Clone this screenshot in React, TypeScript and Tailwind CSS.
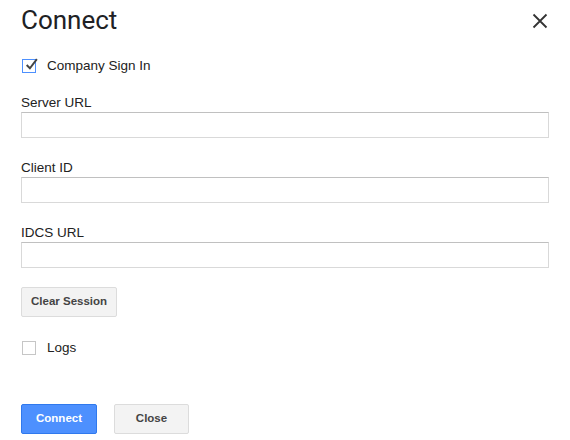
import React, { useState } from 'react';

function Checkbox({ checked, onChange }: { checked: boolean; onChange: () => void }) {
  return (
    <button
      type="button"
      onClick={onChange}
      className={`relative w-[14px] h-[14px] border bg-white ${checked ? 'border-[#4d90fe]' : 'border-[#c6c6c6]'}`}
    >
      {checked && (
        <svg viewBox="0 0 14 14" className="absolute left-[1px] top-[-3px] w-[15px] h-[15px]">
          <path d="M2.5 7.5 L5.5 10.5 L12 2" fill="none" stroke="#444" strokeWidth="1.8" />
        </svg>
      )}
    </button>
  );
}

function Field({ label }: { label: string }) {
  return (
    <div className="flex flex-col">
      <label className="text-[13.5px] leading-[20px] text-[#222] mb-[-1px]">{label}</label>
      <input className="h-[26px] w-full border border-[#d9d9d9] border-t-[#c0c0c0] outline-none px-2 text-[13px]" />
    </div>
  );
}

export default function App() {
  const [company, setCompany] = useState(true);
  const [logs, setLogs] = useState(false);

  return (
    <div className="w-[570px] h-[440px] bg-white pl-[21px] pr-[21px] font-['Liberation_Sans',Arial,sans-serif] text-[#222]">
      {/* Header */}
      <div className="flex items-start justify-between pt-[3px]">
        <h1 className="font-['Roboto',sans-serif] text-[26px] leading-[34px] text-[#202124]">Connect</h1>
        <button type="button" className="mt-[10px] mr-[1px]">
          <svg viewBox="0 0 16 16" className="w-[16px] h-[16px]">
            <path d="M1.5 1.5 L14.5 14.5 M14.5 1.5 L1.5 14.5" stroke="#333" strokeWidth="1.8" />
          </svg>
        </button>
      </div>

      <div className="flex items-center gap-[11px] mt-[21px] pl-[1px]">
        <Checkbox checked={company} onChange={() => setCompany(!company)} />
        <span className="text-[13.5px] leading-[16px]">Company Sign In</span>
      </div>

      <div className="flex flex-col gap-[20px] mt-[19px]">
        <Field label="Server URL" />
        <Field label="Client ID" />
        <Field label="IDCS URL" />
      </div>

      <button
        type="button"
        className="mt-[19px] h-[30px] px-[9px] rounded-[2px] border border-[#dcdcdc] bg-[#f3f3f3] text-[11.5px] font-bold text-[#444]"
      >
        Clear Session
      </button>

      <div className="flex items-center gap-[11px] mt-[23px] pl-[1px]">
        <Checkbox checked={logs} onChange={() => setLogs(!logs)} />
        <span className="text-[13.5px] leading-[16px]">Logs</span>
      </div>

      <div className="flex gap-[17px] mt-[48px]">
        <button
          type="button"
          className="h-[30px] w-[76px] rounded-[2px] border border-[#3079ed] bg-[#4d90fe] text-[11.5px] font-bold text-white"
        >
          Connect
        </button>
        <button
          type="button"
          className="h-[30px] w-[75px] rounded-[2px] border border-[#dcdcdc] bg-[#f3f3f3] text-[11.5px] font-bold text-[#444]"
        >
          Close
        </button>
      </div>
    </div>
  );
}
